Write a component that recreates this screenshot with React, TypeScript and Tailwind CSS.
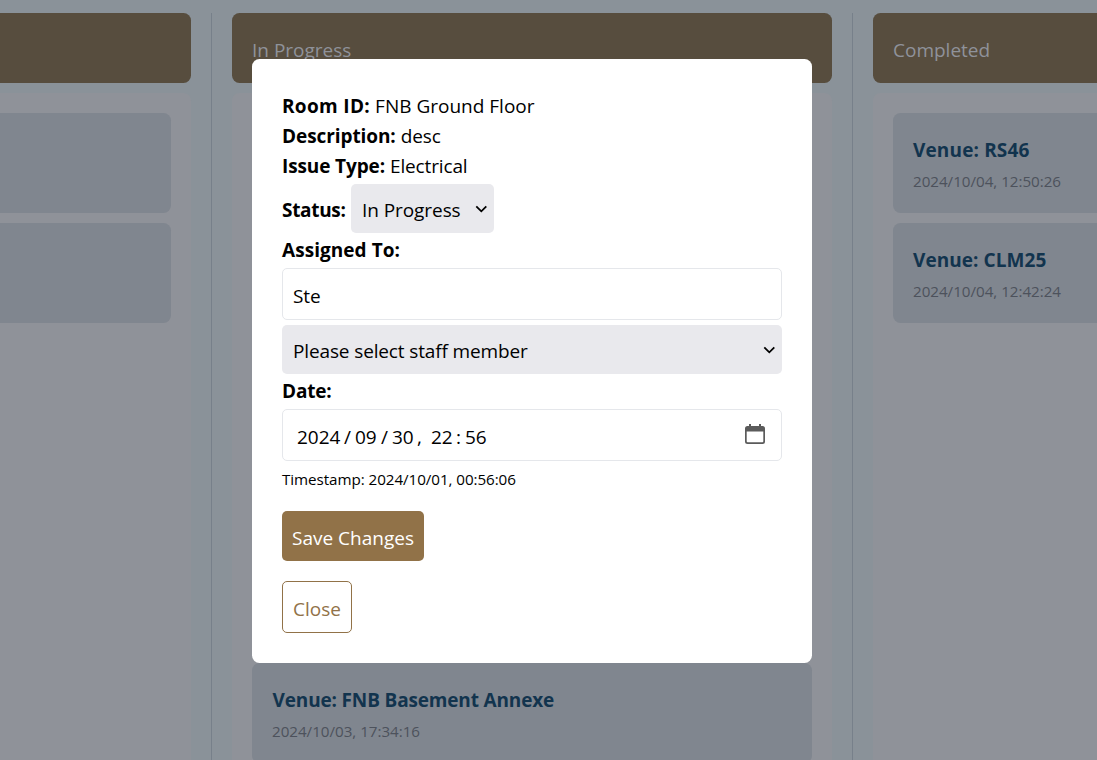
import type { ReactNode } from "react";

type Ticket = { venue: string; date: string; tracking?: string };

function Card({ venue, date, tracking = "" }: Ticket) {
  return (
    <div className="h-[100px] shrink-0 rounded-[7.5px] bg-[#80868f] px-5 pt-[22px]">
      <div className={`h-[30px] whitespace-nowrap text-[19px] leading-[30px] font-bold text-[#12344e] ${tracking}`}>{venue}</div>
      <div className="mt-1 h-6 whitespace-nowrap text-[15.2px] leading-6 tracking-[-0.03px] text-[#4d525c]">{date}</div>
    </div>
  );
}

function Column({ title, tickets }: { title: string; tickets: Ticket[] }) {
  return (
    <section className="flex w-[600px] shrink-0 flex-col gap-[10px]">
      <header className="flex h-[70px] shrink-0 items-center rounded-[7.5px] bg-[#574d3e] px-5 pt-[5px] text-[19px] text-[#8f929a]">
        {title}
      </header>
      <div className="flex h-[800px] flex-col gap-[10px] rounded-[7.5px] bg-[#8f9299] p-5">
        {tickets.map((t, i) => (
          <Card key={i} {...t} />
        ))}
      </div>
    </section>
  );
}

const Divider = () => <div className="w-px shrink-0 bg-[#77808a]" />;

const Label = ({ children, className }: { children: ReactNode; className: string }) => (
  <strong className={`font-bold ${className}`}>{children}</strong>
);

function Chevron() {
  return (
    <svg className="shrink-0" width="12" height="8" viewBox="0 0 12 8" fill="none" stroke="#000" strokeWidth="1.8">
      <path d="M1.300 1.300 L6.300 6.300 L11.300 1.300" />
    </svg>
  );
}

function CalendarIcon() {
  return (
    <svg className="mb-[2px] shrink-0" width="20" height="20" viewBox="0 0 20 20">
      <path
        fill="#5b5b5b"
        fillRule="evenodd"
        d="M4 0h2v2h8V0h2v2h1.5A2.5 2.5 0 0 1 20 4.5v13a2.5 2.5 0 0 1-2.5 2.5h-15A2.5 2.5 0 0 1 0 17.5v-13A2.5 2.5 0 0 1 2.500 2H4zM1.700 7.500v9.800q0 1 1 1h14.600q1 0 1-1V7.500z"
      />
    </svg>
  );
}

const blank: Ticket = { venue: "", date: "" };

export default function App() {
  return (
    <main className="relative h-[760px] w-full overflow-hidden bg-[#8a9299] font-['Open_Sans','Noto_Sans',sans-serif]">
      <div className="-ml-[409px] flex w-max gap-5 pt-[13px]">
        <Column title="" tickets={[blank, blank]} />
        <Divider />
        <Column
          title="In Progress"
          tickets={[
            blank,
            blank,
            blank,
            blank,
            blank,
            { venue: "Venue: FNB Basement Annexe", date: "2024/10/03, 17:34:16", tracking: "pl-[0.6px] tracking-[-0.16px]" },
          ]}
        />
        <Divider />
        <Column
          title="Completed"
          tickets={[
            { venue: "Venue: RS46", date: "2024/10/04, 12:50:26", tracking: "tracking-[0.15px]" },
            { venue: "Venue: CLM25", date: "2024/10/04, 12:42:24", tracking: "tracking-[0.07px]" },
          ]}
        />
      </div>

      <div
        role="dialog"
        className="absolute top-[59px] left-[252px] flex h-[604px] w-[560px] flex-col items-start rounded-[7.5px] bg-white px-[30px] pt-8 text-[19px] leading-[30px] whitespace-nowrap text-black"
      >
        <div className="flex gap-[5px]">
          <Label className="tracking-[0.33px]">Room ID:</Label>
          <span>FNB Ground Floor</span>
        </div>
        <div className="flex gap-[5px]">
          <Label className="tracking-[-0.08px]">Description:</Label>
          <span className="tracking-[-0.1px]">desc</span>
        </div>
        <div className="flex gap-[5px]">
          <Label className="tracking-[-0.12px]">Issue Type:</Label>
          <span className="tracking-[-0.14px]">Electrical</span>
        </div>
        <div className="mt-[3px] flex h-[49px] items-center">
          <Label className="w-[69px] pt-[2px] tracking-[-0.32px]">Status:</Label>
          <div className="flex h-[49px] w-[143px] items-center justify-between rounded-[5px] bg-[#e9e9ed] pr-[7px] pl-[11px]">
            <span className="pt-[2px] tracking-[-0.07px]">In Progress</span>
            <Chevron />
          </div>
        </div>
        <Label className="mt-[2px] tracking-[0.05px]">Assigned To:</Label>
        <div className="mt-[3px] flex h-[52px] w-full items-center rounded-[5px] border border-[#e5e7eb] px-[10px] pt-[3px] tracking-[-0.1px]">
          Ste
        </div>
        <div className="mt-[5px] flex h-[49px] w-full items-center justify-between rounded-[5px] bg-[#e9e9ed] pr-[7px] pl-[11px]">
          <span className="pt-[2px] tracking-[-0.13px]">Please select staff member</span>
          <Chevron />
        </div>
        <Label className="mt-[2px] tracking-[-0.18px]">Date:</Label>
        <div className="mt-[3px] flex h-[52px] w-full items-center justify-between rounded-[5px] border border-[#e5e7eb] pr-[16px] pl-[14px]">
          <div className="flex pt-[3px]">
            <span className="w-[47px]">2024</span>
            <span className="w-[11px]">/</span>
            <span className="w-[26px]">09</span>
            <span className="w-[11px]">/</span>
            <span className="w-[25px]">30</span>
            <span className="w-[14px]">,</span>
            <span className="w-[25px]">22</span>
            <span className="w-[9px]">:</span>
            <span>56</span>
          </div>
          <CalendarIcon />
        </div>
        <div className="mt-[6px] text-[15.2px] leading-6 tracking-[-0.06px]">Timestamp: 2024/10/01, 00:56:06</div>
        <button className="mt-5 h-[50px] w-[142px] rounded-[5px] bg-[#917248] pt-[3px] text-center text-white">
          Save Changes
        </button>
        <button className="mt-5 h-[52px] w-[70px] rounded-[5px] border border-[#917248] pt-[3px] text-center text-[#917248]">
          Close
        </button>
      </div>
    </main>
  );
}
